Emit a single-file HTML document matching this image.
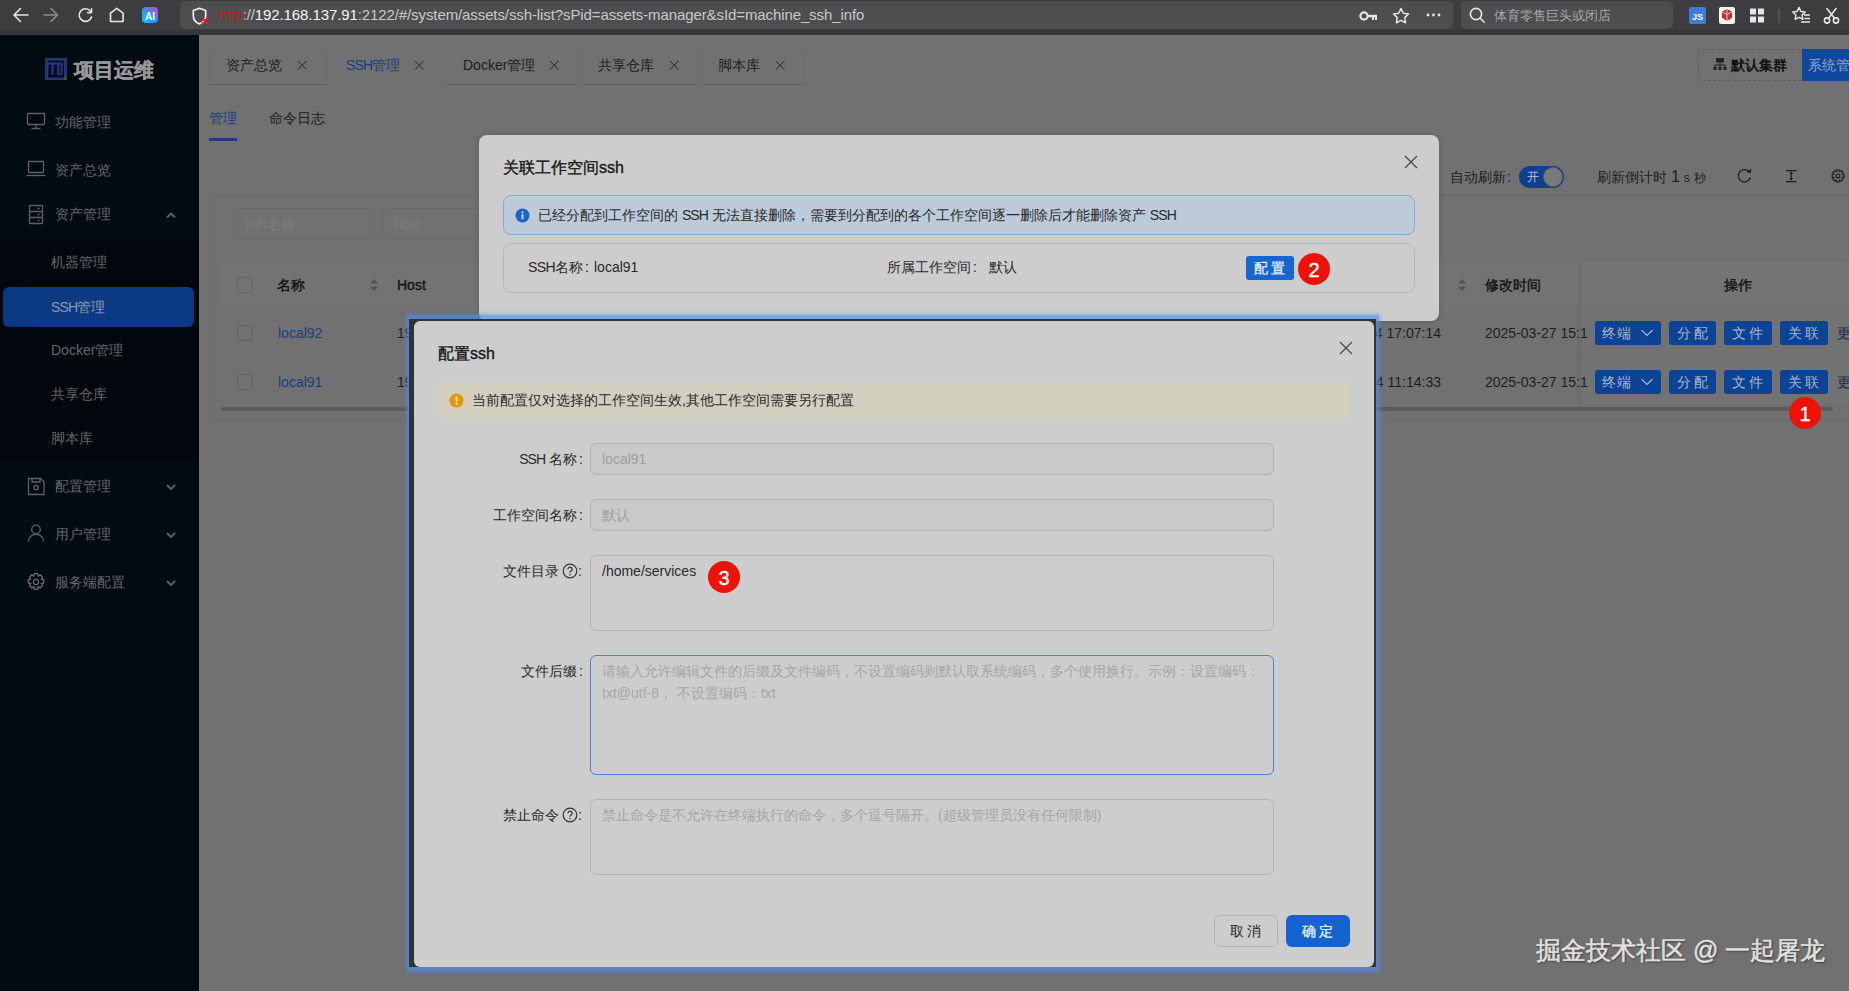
<!DOCTYPE html>
<html><head><meta charset="utf-8">
<style>
*{box-sizing:border-box}
html,body{margin:0;padding:0}
body{width:1849px;height:991px;overflow:hidden;position:relative;background:#717171;font-family:"Liberation Sans",sans-serif;font-size:14px;color:#1c1c1c}
.a{position:absolute}
.t{position:absolute;white-space:nowrap;line-height:20px;height:20px}
.fc{display:inline-block;width:14px;padding-left:2px}
</style></head><body>

<!-- ===== browser bar ===== -->
<div class="a" style="left:0;top:0;width:1849px;height:35px;background:linear-gradient(#3e3e40 0,#3d3d3f 29px,#363638 31px,#363638 35px)"></div>
<svg class="a" style="left:0;top:0" width="180" height="35" viewBox="0 0 180 35">
 <g fill="none" stroke="#e6e6e6" stroke-width="1.6" stroke-linecap="round" stroke-linejoin="round">
  <path d="M28 15H14.5M20.5 8.5L14 15l6.5 6.5"/>
 </g>
 <g fill="none" stroke="#8c8c8c" stroke-width="1.6" stroke-linecap="round" stroke-linejoin="round">
  <path d="M44 15h13.5M51 8.5L57.5 15 51 21.5"/>
 </g>
 <g fill="none" stroke="#e6e6e6" stroke-width="1.6" stroke-linecap="round" stroke-linejoin="round">
  <path d="M90.5 11.2A6.3 6.3 0 1 0 91.5 17"/>
  <path d="M91.5 8.8v3.8h-3.8"/>
  <path d="M110.5 21.5v-8.3l6.3-4.8 6.3 4.8v8.3z"/>
 </g>
 <defs><linearGradient id="aig" x1="0" y1="1" x2="1" y2="0"><stop offset="0" stop-color="#12c8e8"/><stop offset="0.55" stop-color="#3a8cf0"/><stop offset="1" stop-color="#e040c0"/></linearGradient></defs>
 <rect x="142" y="7" width="16" height="16" rx="4" fill="url(#aig)"/>
 <text x="150" y="19.5" font-family="Liberation Sans" font-weight="bold" font-size="10" fill="#fff" text-anchor="middle">AI</text>
</svg>
<div class="a" style="left:180px;top:1px;width:1273px;height:28px;background:#4e4e51;border-radius:5px"></div>
<svg class="a" style="left:188px;top:4px" width="24" height="24" viewBox="0 0 24 24">
 <path d="M11.5 4.2l6.2 2.3v5.2c0 4-2.6 6.9-6.2 8.2-3.6-1.3-6.2-4.2-6.2-8.2V6.5z" fill="none" stroke="#f0f0f0" stroke-width="1.7" stroke-linejoin="round"/>
 <path d="M14.5 14.5l5 5M19.5 14.5l-5 5" stroke="#e02020" stroke-width="2.2" stroke-linecap="round"/>
</svg>
<div class="t" style="left:218px;top:5px;font-size:15px;color:#c8c8c8;letter-spacing:-0.1px"><span style="color:#b02626;text-decoration:line-through">http</span>://<span style="color:#f4f4f4">192.168.137.91</span>:2122/#/system/assets/ssh-list?sPid=assets-manager&amp;sId=machine_ssh_info</div>
<svg class="a" style="left:1358px;top:5px" width="90" height="22" viewBox="0 0 90 22">
 <g fill="#e6e6e6">
  <circle cx="6" cy="11" r="3.6" fill="none" stroke="#e6e6e6" stroke-width="2.2"/>
  <rect x="9" y="9.8" width="10" height="2.4"/>
  <rect x="14" y="11" width="2" height="4"/><rect x="17" y="11" width="2" height="4"/>
 </g>
 <path d="M43 3.5l2.3 4.8 5.2.7-3.8 3.6.9 5.2L43 15.3l-4.6 2.5.9-5.2-3.8-3.6 5.2-.7z" fill="none" stroke="#e6e6e6" stroke-width="1.5" stroke-linejoin="round"/>
 <circle cx="70" cy="10" r="1.4" fill="#e6e6e6"/><circle cx="75.5" cy="10" r="1.4" fill="#e6e6e6"/><circle cx="81" cy="10" r="1.4" fill="#e6e6e6"/>
</svg>
<div class="a" style="left:1461px;top:1px;width:212px;height:28px;background:#4e4e51;border-radius:5px"></div>
<svg class="a" style="left:1468px;top:6px" width="20" height="20" viewBox="0 0 20 20">
 <circle cx="8" cy="8" r="5.6" fill="none" stroke="#e6e6e6" stroke-width="1.6"/><path d="M12.2 12.2l4 4" stroke="#e6e6e6" stroke-width="1.6" stroke-linecap="round"/>
</svg>
<div class="t" style="left:1494px;top:6px;font-size:13px;color:#a8a8a8">体育零售巨头或闭店</div>
<svg class="a" style="left:1680px;top:4px" width="169" height="26" viewBox="0 0 169 26">
 <rect x="9" y="3" width="17" height="17" rx="2" fill="#3d7be0"/>
 <text x="17.5" y="15.5" font-family="Liberation Sans" font-weight="bold" font-size="9" fill="#fff" text-anchor="middle">JS</text>
 <rect x="39" y="3" width="16" height="17" rx="2" fill="#f4f4f4"/>
 <path d="M47 5l5 2.8v6L47 17l-5-3.2v-6z" fill="#d02828"/><path d="M47 5v12M42 7.8l5 3 5-3" stroke="#f4f4f4" stroke-width="0.8" fill="none"/>
 <rect x="70" y="4.5" width="6" height="6" fill="#e6e6e6"/><rect x="78" y="4.5" width="6" height="6" fill="#e6e6e6"/>
 <rect x="70" y="12.5" width="6" height="6" fill="#e6e6e6"/><rect x="78" y="12.5" width="6" height="6" fill="#e6e6e6"/>
 <rect x="98.5" y="5" width="1" height="14" fill="#6a6a6a"/>
 <path d="M119 3.5l1.9 3.9 4.3.6-3.1 3 .7 4.3-3.8-2-3.8 2 .7-4.3-3.1-3 4.3-.6z" fill="none" stroke="#e6e6e6" stroke-width="1.5" stroke-linejoin="round"/>
 <path d="M124 11h6M124.5 14.5h5.5M121 18h9" stroke="#e6e6e6" stroke-width="1.5"/>
 <circle cx="147" cy="16.5" r="2.6" fill="none" stroke="#e6e6e6" stroke-width="1.6"/><circle cx="156" cy="16.5" r="2.6" fill="none" stroke="#e6e6e6" stroke-width="1.6"/>
 <path d="M148.5 14.2L156.5 4M154.5 14.2L146.5 4" stroke="#e6e6e6" stroke-width="1.6"/>
</svg>

<!-- ===== sidebar ===== -->
<div class="a" style="left:0;top:35px;width:199px;height:956px;background:#020a12"></div>
<div class="a" style="left:0;top:240px;width:199px;height:222px;background:#02070d"></div>
<div class="a" style="left:3px;top:287px;width:191px;height:40px;background:#0c3a82;border-radius:6px"></div>
<svg class="a" style="left:44px;top:57px" width="24" height="24" viewBox="44 57 24 24">
 <rect x="45" y="58" width="22" height="22" fill="#24357a"/>
 <rect x="48" y="60.6" width="16" height="17" fill="#060c1c"/>
 <path d="M45 62.6h17.6v10.5a2 2 0 0 1-2 2H48V62.6z" fill="#27388a"/>
 <rect x="48.5" y="64.6" width="3" height="10.5" fill="#060c1c"/>
 <rect x="53.6" y="64.6" width="3.6" height="10.5" fill="#060c1c"/>
 <rect x="59.4" y="64.6" width="1.4" height="9" fill="#060c1c"/>
 <circle cx="65.4" cy="78.4" r="1.4" fill="#7a4a18"/>
</svg>
<div class="t" style="left:74px;top:59px;font-size:20px;line-height:22px;height:22px;font-weight:bold;color:#979797;-webkit-text-stroke:0.4px #979797">项目运维</div>
<svg class="a" style="left:0;top:100px" width="199" height="500" viewBox="0 100 199 500">
 <g fill="none" stroke="#5e6165" stroke-width="1.3">
  <rect x="27.5" y="113.5" width="17" height="11" rx="0.8"/><path d="M36 124.5v3.5M31.5 128.5h9"/>
  <rect x="28.5" y="161.5" width="15" height="11" rx="0.8"/><path d="M26.5 175.5h19"/>
  <rect x="29.5" y="205.5" width="13" height="18" rx="0.8"/><path d="M29.5 211.5h13M29.5 217.5h13M37.5 208.5h2M37.5 214.5h2M37.5 220.5h2"/>
  <path d="M167 217.5l4-4 4 4" stroke-width="1.8"/>
  <path d="M28.5 478.5h12l3.5 3.5v12.5h-15.5z"/><path d="M32 478.5v3.5h8v-3.5"/><circle cx="36.2" cy="487.5" r="2.2"/>
  <path d="M167 485l4 4 4-4" stroke-width="1.8"/>
  <circle cx="36" cy="529.5" r="4.3"/><path d="M28.5 541.5c0-4.5 3.3-7.2 7.5-7.2s7.5 2.7 7.5 7.2"/>
  <path d="M167 533l4 4 4-4" stroke-width="1.8"/>
  <path d="M167 581l4 4 4-4" stroke-width="1.8"/>
 </g>
 <g transform="translate(36 582)" fill="none" stroke="#6b6e72" stroke-width="1.3">
  <path d="M-1.6-8.3h3.2l.6 2.3 2-1.1 2.3 2.3-1.1 2 2.3.6v3.2l-2.3.6 1.1 2-2.3 2.3-2-1.1-.6 2.3h-3.2l-.6-2.3-2 1.1-2.3-2.3 1.1-2-2.3-.6v-3.2l2.3-.6-1.1-2 2.3-2.3 2 1.1z"/>
  <circle cx="0" cy="0" r="2.6"/>
 </g>
</svg>
<div class="t" style="left:55px;top:112px;color:#636669">功能管理</div>
<div class="t" style="left:55px;top:160px;color:#636669">资产总览</div>
<div class="t" style="left:55px;top:204px;color:#636669">资产管理</div>
<div class="t" style="left:51px;top:252px;color:#636669">机器管理</div>
<div class="t" style="left:51px;top:297px;color:#8f98a8"><span style="letter-spacing:-0.9px">SSH</span>管理</div>
<div class="t" style="left:51px;top:340px;color:#636669">Docker管理</div>
<div class="t" style="left:51px;top:384px;color:#636669">共享仓库</div>
<div class="t" style="left:51px;top:428px;color:#636669">脚本库</div>
<div class="t" style="left:55px;top:476px;color:#636669">配置管理</div>
<div class="t" style="left:55px;top:524px;color:#636669">用户管理</div>
<div class="t" style="left:55px;top:572px;color:#636669">服务端配置</div>

<!-- ===== main page ===== -->
<!-- tabs -->
<div class="a" style="left:208px;top:50px;width:120px;height:35px;border:1px solid #6d6d6d;border-bottom-color:#656565"></div>
<div class="a" style="left:445px;top:50px;width:134px;height:35px;border:1px solid #6d6d6d;border-bottom-color:#656565"></div>
<div class="a" style="left:582px;top:50px;width:116px;height:35px;border:1px solid #6d6d6d;border-bottom-color:#656565"></div>
<div class="a" style="left:701px;top:50px;width:104px;height:35px;border:1px solid #6d6d6d;border-bottom-color:#656565"></div>
<div class="t" style="left:226px;top:55px;color:#1e1e1e">资产总览</div>
<div class="t" style="left:346px;top:55px;color:#1c3e7e"><span style="letter-spacing:-0.9px">SSH</span>管理</div>
<div class="t" style="left:463px;top:55px;color:#1e1e1e">Docker管理</div>
<div class="t" style="left:598px;top:55px;color:#1e1e1e">共享仓库</div>
<div class="t" style="left:718px;top:55px;color:#1e1e1e">脚本库</div>
<svg class="a" style="left:199px;top:35px" width="620" height="60" viewBox="199 35 620 60">
 <g stroke="#333" stroke-width="1.05" fill="none">
  <path d="M298 61l8.5 8.5M306.5 61L298 69.5"/>
  <path d="M415 61l8.5 8.5M423.5 61L415 69.5"/>
  <path d="M550 61l8.5 8.5M558.5 61L550 69.5"/>
  <path d="M670 61l8.5 8.5M678.5 61L670 69.5"/>
  <path d="M776 61l8.5 8.5M784.5 61L776 69.5"/>
 </g>
</svg>
<!-- right top buttons -->
<div class="a" style="left:1698px;top:49px;width:105px;height:32px;border:1px dashed #5e5e5e;border-radius:4px 0 0 4px"></div>
<svg class="a" style="left:1713px;top:57px" width="14" height="14" viewBox="0 0 14 14">
 <rect x="3" y="1" width="8" height="4.5" fill="#222"/><path d="M7 5.5v2.5M2 8h10M2 8v2M12 8v2M7 8v2" stroke="#222" stroke-width="1.2" fill="none"/>
 <rect x="0.5" y="10" width="3" height="3" fill="#222"/><rect x="5.5" y="10" width="3" height="3" fill="#222"/><rect x="10.5" y="10" width="3" height="3" fill="#222"/>
</svg>
<div class="t" style="left:1731px;top:55px;color:#111;font-weight:bold">默认集群</div>
<div class="a" style="left:1802px;top:49px;width:47px;height:32px;background:#0f47a0"></div>
<div class="t" style="left:1808px;top:55px;color:#8ea3c8">系统管理</div>
<!-- sub tabs -->
<div class="t" style="left:209px;top:108px;color:#1c3e7e">管理</div>
<div class="t" style="left:269px;top:108px;color:#1e1e1e">命令日志</div>
<div class="a" style="left:209px;top:138px;width:28px;height:3px;background:#1c3e7e"></div>
<!-- toolbar right -->
<div class="t" style="left:1450px;top:167px;color:#1e1e1e">自动刷新<span style="margin-left:1px">:</span></div>
<div class="a" style="left:1519px;top:166px;width:45px;height:22px;background:#0f3f8e;border-radius:11px"></div>
<div class="a" style="left:1543px;top:167px;width:20px;height:20px;background:#7a7a7a;border:1px solid #5a5f6a;border-radius:10px"></div>
<div class="t" style="left:1527px;top:167px;color:#b9c3d6;font-size:12px">开</div>
<div class="t" style="left:1597px;top:167px;color:#1e1e1e">刷新倒计时 <span style="font-size:16px">1</span> <span style="font-size:12px">s</span> <span style="font-size:12px">秒</span></div>
<svg class="a" style="left:1730px;top:165px" width="119" height="24" viewBox="1730 165 119 24">
 <g fill="none" stroke="#1e1e1e" stroke-width="1.25">
  <path d="M1749.6 172.2a6.2 6.2 0 1 0 .9 5.3"/>
 </g>
 <path d="M1751.2 168.6l-.3 4.6-4.3-1.2z" fill="#1e1e1e"/>
 <g fill="none" stroke="#1e1e1e" stroke-width="1.25">
  <path d="M1786 170.6h10.5M1786 181.6h10.5M1791.2 172.5v7.2"/>
 </g>
 <path d="M1791.2 171.6l2 2.4h-4zM1791.2 180.6l2-2.4h-4z" fill="#1e1e1e"/>
 <g transform="translate(1838 176) scale(0.86)" fill="none" stroke="#1e1e1e" stroke-width="1.4">
  <path d="M-1.5-7h3l.5 2 1.8-1 2.1 2.1-1 1.8 2 .5v3l-2 .5 1 1.8-2.1 2.1-1.8-1-.5 2h-3l-.5-2-1.8 1-2.1-2.1 1-1.8-2-.5v-3l2-.5-1-1.8 2.1-2.1 1.8 1z"/>
  <circle r="2.3"/>
 </g>
</svg>
<div class="a" style="left:1439px;top:194px;width:410px;height:1px;background:#6b6b6b"></div>
<!-- card -->
<div class="a" style="left:210px;top:195px;width:1660px;height:226px;border:1px solid #6a6a6a;border-radius:6px"></div>
<div class="a" style="left:234px;top:208px;width:140px;height:31px;border:1px solid #6a6a6a;border-radius:6px"></div>
<div class="t" style="left:245px;top:214px;color:#7d7d7d">ssh名称</div>
<div class="a" style="left:382px;top:208px;width:120px;height:31px;border:1px solid #6a6a6a;border-radius:6px"></div>
<div class="t" style="left:394px;top:214px;color:#7d7d7d">host</div>
<!-- table -->
<div class="a" style="left:221px;top:261px;width:1628px;height:50px;background:#737373"></div>
<div class="a" style="left:221px;top:311px;width:1628px;height:1px;background:#707070"></div>
<div class="a" style="left:221px;top:358px;width:1628px;height:1px;background:#707070"></div>
<div class="a" style="left:1581px;top:262px;width:268px;height:143px;background:rgba(120,120,120,0.25);box-shadow:-2px 0 4px rgba(0,0,0,0.08)"></div>
<div class="a" style="left:237px;top:277px;width:16px;height:16px;border:1px solid #636363;border-radius:3px"></div>
<div class="a" style="left:237px;top:325px;width:16px;height:16px;border:1px solid #636363;border-radius:3px"></div>
<div class="a" style="left:237px;top:374px;width:16px;height:16px;border:1px solid #636363;border-radius:3px"></div>
<div class="t" style="left:277px;top:275px;color:#111;-webkit-text-stroke:0.35px #111">名称</div>
<div class="t" style="left:397px;top:275px;color:#111;-webkit-text-stroke:0.3px #111">Host</div>
<svg class="a" style="left:368px;top:277px" width="12" height="16" viewBox="0 0 12 16"><path d="M6 2l4 4.5H2zM6 14l4-4.5H2z" fill="#555"/></svg>
<div class="t" style="left:278px;top:323px;color:#1c3e7e">local92</div>
<div class="t" style="left:278px;top:372px;color:#1c3e7e">local91</div>
<div class="t" style="left:397px;top:323px;color:#1e1e1e">192.168.137.92</div>
<div class="t" style="left:397px;top:372px;color:#1e1e1e">192.168.137.91</div>
<svg class="a" style="left:1456px;top:277px" width="12" height="16" viewBox="0 0 12 16"><path d="M6 2l4 4.5H2zM6 14l4-4.5H2z" fill="#555"/></svg>
<div class="t" style="left:1485px;top:275px;color:#111;-webkit-text-stroke:0.35px #111">修改时间</div>
<div class="t" style="left:1724px;top:275px;color:#111;-webkit-text-stroke:0.35px #111">操作</div>
<div class="t" style="right:408px;top:323px;color:#1e1e1e">2024-03-24 17:07:14</div>
<div class="t" style="right:408px;top:372px;color:#1e1e1e">2024-03-24 11:14:33</div>
<div class="t" style="left:1485px;top:323px;color:#1e1e1e">2025-03-27 15:1</div>
<div class="t" style="left:1485px;top:372px;color:#1e1e1e">2025-03-27 15:1</div>
<div class="a" style="left:1595px;top:321px;width:66px;height:24px;background:#0d4394;border-radius:3px"></div>
<div class="t" style="left:1602px;top:323px;color:#a9b6cf;letter-spacing:1px">终端</div>
<svg class="a" style="left:1640px;top:327px" width="14" height="12" viewBox="0 0 14 12"><path d="M1.5 3l5.5 5.5L12.5 3" fill="none" stroke="#a9b6cf" stroke-width="1.1"/></svg>
<div class="a" style="left:1669px;top:321px;width:47px;height:24px;background:#0d4394;border-radius:3px"></div>
<div class="t" style="left:1677px;top:323px;color:#a9b6cf;letter-spacing:3px">分配</div>
<div class="a" style="left:1724px;top:321px;width:48px;height:24px;background:#0d4394;border-radius:3px"></div>
<div class="t" style="left:1732px;top:323px;color:#a9b6cf;letter-spacing:3px">文件</div>
<div class="a" style="left:1780px;top:321px;width:48px;height:24px;background:#0d4394;border-radius:3px"></div>
<div class="t" style="left:1788px;top:323px;color:#a9b6cf;letter-spacing:3px">关联</div>
<div class="t" style="left:1837px;top:323px;color:#1f2d4e">更多</div>
<div class="a" style="left:1595px;top:370px;width:66px;height:24px;background:#0d4394;border-radius:3px"></div>
<div class="t" style="left:1602px;top:372px;color:#a9b6cf;letter-spacing:1px">终端</div>
<svg class="a" style="left:1640px;top:376px" width="14" height="12" viewBox="0 0 14 12"><path d="M1.5 3l5.5 5.5L12.5 3" fill="none" stroke="#a9b6cf" stroke-width="1.1"/></svg>
<div class="a" style="left:1669px;top:370px;width:47px;height:24px;background:#0d4394;border-radius:3px"></div>
<div class="t" style="left:1677px;top:372px;color:#a9b6cf;letter-spacing:3px">分配</div>
<div class="a" style="left:1724px;top:370px;width:48px;height:24px;background:#0d4394;border-radius:3px"></div>
<div class="t" style="left:1732px;top:372px;color:#a9b6cf;letter-spacing:3px">文件</div>
<div class="a" style="left:1780px;top:370px;width:48px;height:24px;background:#0d4394;border-radius:3px"></div>
<div class="t" style="left:1788px;top:372px;color:#a9b6cf;letter-spacing:3px">关联</div>
<div class="t" style="left:1837px;top:372px;color:#1f2d4e">更多</div>

<div class="a" style="left:221px;top:407px;width:1612px;height:4px;background:#5c5c5c;border-radius:2px"></div>

<!-- modal 1 -->
<div class="a" style="left:479px;top:135px;width:960px;height:186px;background:#cdcdcd;border-radius:8px;box-shadow:0 0 6px rgba(0,0,0,0.15)"></div>
<div class="t" style="left:503px;top:158px;font-size:16px;-webkit-text-stroke:0.35px #161616;color:#161616">关联工作空间ssh</div>
<svg class="a" style="left:1403px;top:154px" width="16" height="16" viewBox="0 0 16 16"><path d="M2 2l12 12M14 2L2 14" stroke="#4a4a4a" stroke-width="1.3"/></svg>
<div class="a" style="left:503px;top:195px;width:912px;height:40px;background:#bccad9;border:1px solid #86a8d6;border-radius:8px"></div>
<svg class="a" style="left:515px;top:208px" width="15" height="15" viewBox="0 0 15 15"><circle cx="7.5" cy="7.5" r="7" fill="#1b63cf"/><rect x="6.6" y="6.2" width="1.8" height="5.2" fill="#d8e2f0"/><circle cx="7.5" cy="4.2" r="1.05" fill="#d8e2f0"/></svg>
<div class="t" style="left:538px;top:205px;color:#2a2a2a">已经分配到工作空间的 <span style="letter-spacing:-0.9px">SSH</span> 无法直接删除，需要到分配到的各个工作空间逐一删除后才能删除资产 <span style="letter-spacing:-0.9px">SSH</span></div>
<div class="a" style="left:503px;top:243px;width:912px;height:50px;border:1px solid #b7b7b7;border-radius:8px"></div>
<div class="t" style="left:528px;top:257px;color:#2a2a2a"><span style="letter-spacing:-0.6px">SSH</span>名称<span class="fc" style="width:11px">:</span>local91</div>
<div class="t" style="left:887px;top:257px;color:#2a2a2a">所属工作空间<span class="fc">:</span>&nbsp;默认</div>
<div class="a" style="left:1246px;top:256px;width:48px;height:24px;background:#1766d0;border-radius:3px"></div>
<div class="t" style="left:1254px;top:258px;color:#e6edf7;letter-spacing:3px;-webkit-text-stroke:0.3px #e6edf7">配置</div>

<!-- modal 2 frame -->
<div class="a" style="left:407px;top:315px;width:972px;height:656px;background:rgba(76,140,239,0.62);box-shadow:0 0 4px 1px rgba(76,140,239,0.5)"></div>
<div class="a" style="left:409px;top:319px;width:967px;height:648px;background:#30343a"></div>
<div class="a" style="left:414px;top:321px;width:960px;height:646px;background:#cdcdcd;border-radius:6px"></div>
<div class="t" style="left:438px;top:344px;font-size:16px;-webkit-text-stroke:0.35px #161616;color:#161616">配置ssh</div>
<svg class="a" style="left:1338px;top:340px" width="16" height="16" viewBox="0 0 16 16"><path d="M2 2l12 12M14 2L2 14" stroke="#4a4a4a" stroke-width="1.3"/></svg>
<div class="a" style="left:438px;top:382px;width:912px;height:36px;background:#d3cfbf;border-radius:2px"></div>
<svg class="a" style="left:449px;top:393px" width="15" height="15" viewBox="0 0 15 15"><circle cx="7.5" cy="7.5" r="7" fill="#e0960e"/><rect x="6.6" y="3.4" width="1.8" height="5.4" fill="#f3e3c4"/><circle cx="7.5" cy="10.9" r="1.05" fill="#f3e3c4"/></svg>
<div class="t" style="left:472px;top:390px;color:#2a2a2a">当前配置仅对选择的工作空间生效,其他工作空间需要另行配置</div>

<div class="t" style="right:1266px;top:449px;color:#2a2a2a"><span style="letter-spacing:-0.9px">SSH</span> 名称<span style="margin-left:2px">:</span></div>
<div class="a" style="left:590px;top:443px;width:684px;height:32px;background:#c9c9c9;border:1px solid #b3b3b3;border-radius:6px"></div>
<div class="t" style="left:602px;top:449px;color:#9e9e9e">local91</div>

<div class="t" style="right:1266px;top:505px;color:#2a2a2a">工作空间名称<span style="margin-left:2px">:</span></div>
<div class="a" style="left:590px;top:499px;width:684px;height:32px;background:#c9c9c9;border:1px solid #b3b3b3;border-radius:6px"></div>
<div class="t" style="left:602px;top:505px;color:#9e9e9e">默认</div>

<div class="t" style="left:503px;top:561px;color:#2a2a2a">文件目录</div>
<svg class="a" style="left:562px;top:563px" width="16" height="16" viewBox="0 0 16 16"><circle cx="8" cy="8" r="6.8" fill="none" stroke="#333" stroke-width="1.2"/><path d="M5.9 6.2a2.1 2.1 0 1 1 3.2 1.8c-.8.5-1.1.9-1.1 1.7" fill="none" stroke="#333" stroke-width="1.2"/><circle cx="8" cy="11.7" r="0.8" fill="#333"/></svg>
<div class="t" style="left:578px;top:561px;color:#2a2a2a">:</div>
<div class="a" style="left:590px;top:555px;width:684px;height:76px;border:1px solid #b3b3b3;border-radius:6px"></div>
<div class="t" style="left:602px;top:561px;color:#2a2a2a">/home/services</div>

<div class="t" style="right:1266px;top:661px;color:#2a2a2a">文件后缀<span style="margin-left:2px">:</span></div>
<div class="a" style="left:590px;top:655px;width:684px;height:120px;border:1px solid #4a82d6;border-radius:6px"></div>
<div class="t" style="left:602px;top:661px;color:#a6a6a6">请输入允许编辑文件的后缀及文件编码，不设置编码则默认取系统编码，多个使用换行。示例：设置编码：</div>
<div class="t" style="left:602px;top:683px;color:#a6a6a6">txt@utf-8，&nbsp;不设置编码：txt</div>

<div class="t" style="left:503px;top:805px;color:#2a2a2a">禁止命令</div>
<svg class="a" style="left:562px;top:807px" width="16" height="16" viewBox="0 0 16 16"><circle cx="8" cy="8" r="6.8" fill="none" stroke="#333" stroke-width="1.2"/><path d="M5.9 6.2a2.1 2.1 0 1 1 3.2 1.8c-.8.5-1.1.9-1.1 1.7" fill="none" stroke="#333" stroke-width="1.2"/><circle cx="8" cy="11.7" r="0.8" fill="#333"/></svg>
<div class="t" style="left:578px;top:805px;color:#2a2a2a">:</div>
<div class="a" style="left:590px;top:799px;width:684px;height:76px;border:1px solid #b3b3b3;border-radius:6px"></div>
<div class="t" style="left:602px;top:805px;color:#a6a6a6">禁止命令是不允许在终端执行的命令，多个逗号隔开。(超级管理员没有任何限制)</div>

<div class="a" style="left:1214px;top:915px;width:64px;height:32px;border:1px solid #b3b3b3;border-radius:6px"></div>
<div class="t" style="left:1230px;top:921px;color:#1e1e1e;letter-spacing:3px">取消</div>
<div class="a" style="left:1286px;top:915px;width:64px;height:32px;background:#1363d1;border-radius:6px"></div>
<div class="t" style="left:1302px;top:921px;color:#e8eef8;letter-spacing:3px;-webkit-text-stroke:0.3px #e8eef8">确定</div>

<!-- badges -->
<div class="a" style="left:1789px;top:397px;width:32px;height:32px;border-radius:16px;background:#ee1206"></div>
<div class="t" style="left:1789px;top:403px;width:32px;text-align:center;color:#fff;font-size:20px;line-height:22px;height:22px;-webkit-text-stroke:0.4px #fff">1</div>
<div class="a" style="left:1298px;top:253px;width:32px;height:32px;border-radius:16px;background:#ee1206"></div>
<div class="t" style="left:1298px;top:259px;width:32px;text-align:center;color:#fff;font-size:20px;line-height:22px;height:22px;-webkit-text-stroke:0.4px #fff">2</div>
<div class="a" style="left:708px;top:561px;width:32px;height:32px;border-radius:16px;background:#ee1206"></div>
<div class="t" style="left:708px;top:567px;width:32px;text-align:center;color:#fff;font-size:20px;line-height:22px;height:22px;-webkit-text-stroke:0.4px #fff">3</div>

<!-- watermark -->
<div class="t" style="left:1536px;top:936px;font-size:25px;line-height:28px;height:28px;color:#e0e0e0;-webkit-text-stroke:0.5px #e0e0e0;text-shadow:1px 1px 2px rgba(0,0,0,0.55)">掘金技术社区 @ 一起屠龙</div>

</body></html>
